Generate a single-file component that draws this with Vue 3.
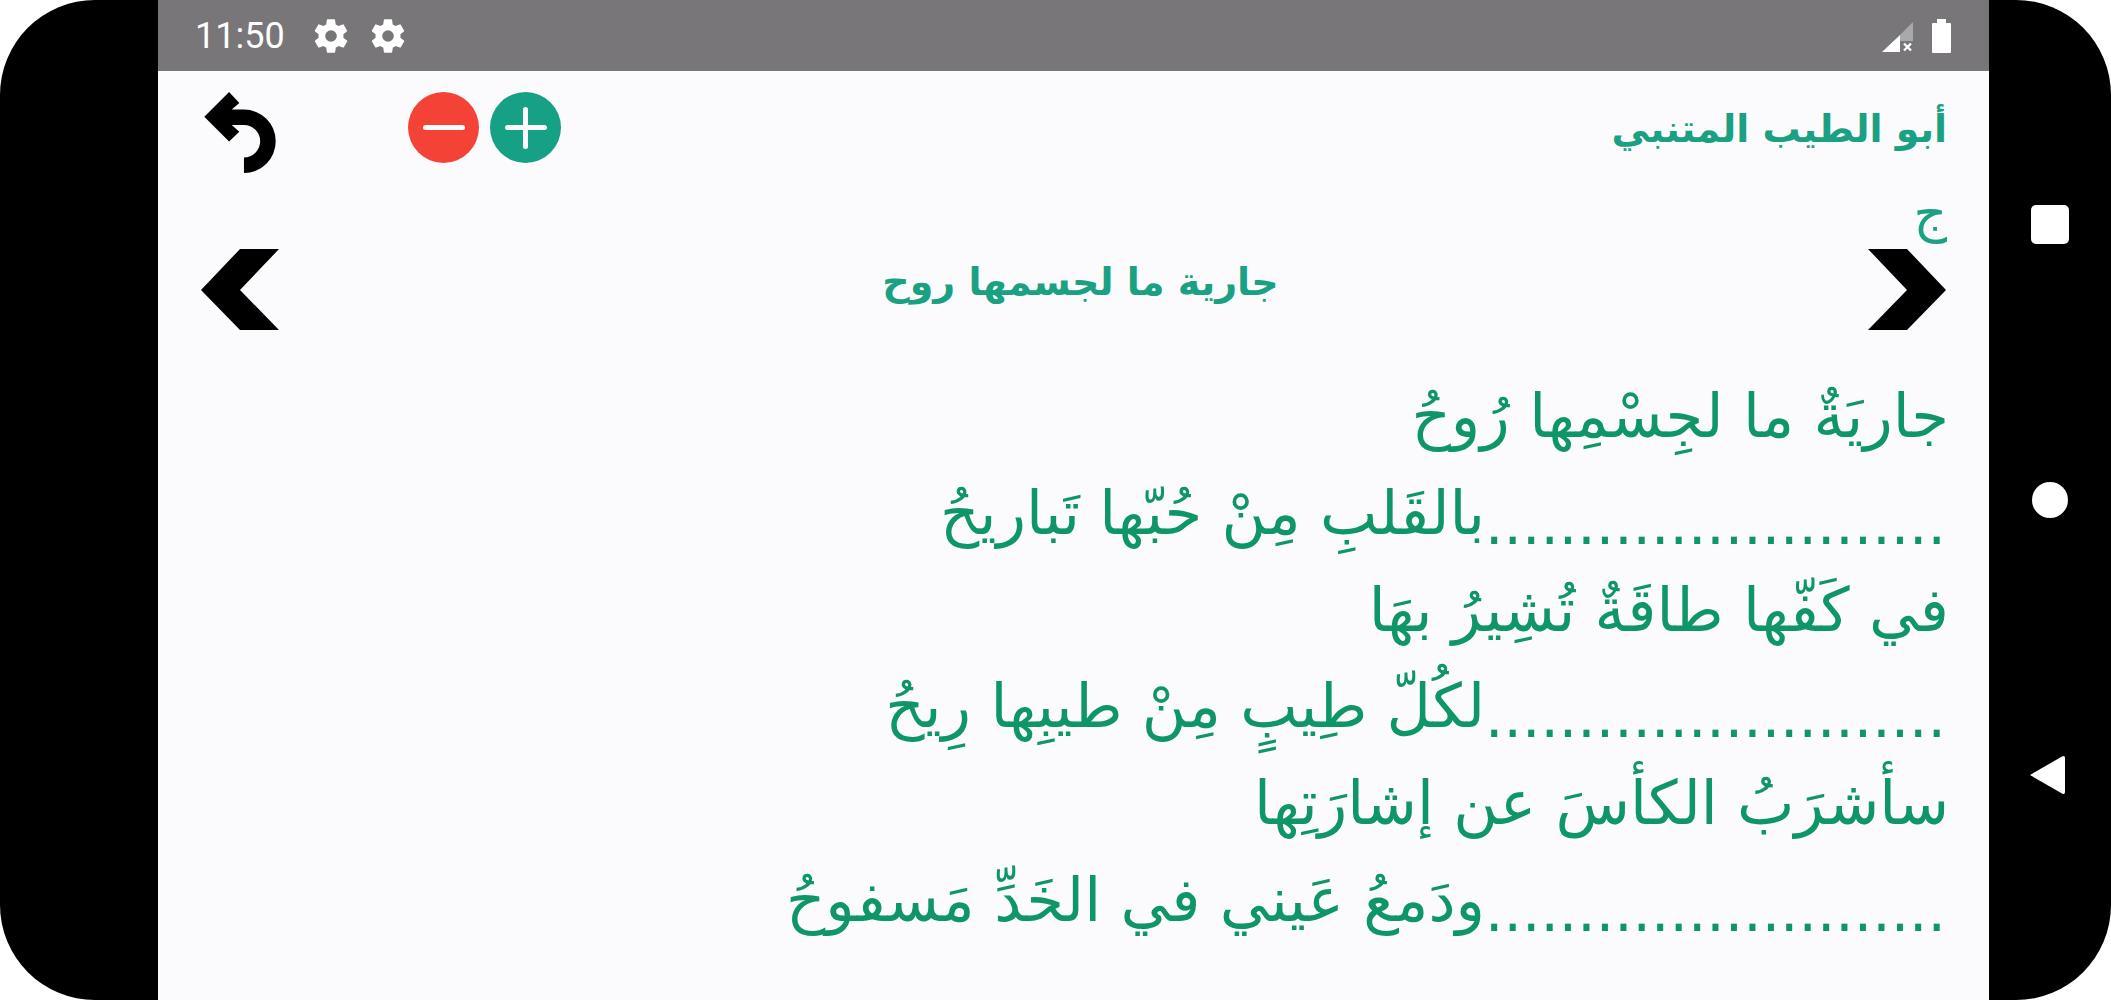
<script setup>
const dots = '.........................'
const lines = [
  { text: 'جاريَةٌ ما لجِسْمِها رُوحُ' },
  { text: 'بالقَلبِ مِنْ حُبّها تَباريحُ', dotted: true },
  { text: 'في كَفّها طاقَةٌ تُشِيرُ بهَا' },
  { text: 'لكُلّ طِيبٍ مِنْ طيبِها رِيحُ', dotted: true },
  { text: 'سأشرَبُ الكأسَ عن إشارَتِها' },
  { text: 'ودَمعُ عَيني في الخَدِّ مَسفوحُ', dotted: true }
]
</script>

<template>
  <div class="frame">
    <div class="screen">
      <header class="status">
        <span class="time">11:50</span>
        <svg class="gear" viewBox="0 0 24 24"><path fill-rule="evenodd" d="M19.4 13c.04-.32.1-.66.1-1s-.06-.68-.1-1l2.1-1.65c.2-.15.25-.42.12-.64l-2-3.46c-.12-.22-.39-.3-.6-.22l-2.5 1c-.52-.4-1.08-.73-1.7-.98l-.37-2.65A.5.5 0 0 0 14 2h-4a.5.5 0 0 0-.5.42l-.37 2.65c-.62.25-1.18.59-1.7.98l-2.5-1c-.22-.08-.48 0-.6.22l-2 3.46c-.13.22-.07.49.12.64L4.57 11c-.04.32-.07.66-.07 1s.03.68.07 1l-2.1 1.65c-.2.15-.25.42-.12.64l2 3.46c.12.22.39.3.6.22l2.5-1c.52.4 1.08.73 1.7.98l.37 2.65c.04.24.25.42.5.42h4c.25 0 .46-.18.5-.42l.37-2.65c.62-.25 1.18-.59 1.7-.98l2.5 1c.22.08.48 0 .6-.22l2-3.46c.13-.22.07-.49-.12-.64L19.4 13zM12 15.5a3.5 3.5 0 1 1 0-7 3.5 3.5 0 0 1 0 7z" fill="#fff"/></svg>
        <svg class="gear" viewBox="0 0 24 24"><path fill-rule="evenodd" d="M19.4 13c.04-.32.1-.66.1-1s-.06-.68-.1-1l2.1-1.65c.2-.15.25-.42.12-.64l-2-3.46c-.12-.22-.39-.3-.6-.22l-2.5 1c-.52-.4-1.08-.73-1.7-.98l-.37-2.65A.5.5 0 0 0 14 2h-4a.5.5 0 0 0-.5.42l-.37 2.65c-.62.25-1.18.59-1.7.98l-2.5-1c-.22-.08-.48 0-.6.22l-2 3.46c-.13.22-.07.49.12.64L4.57 11c-.04.32-.07.66-.07 1s.03.68.07 1l-2.1 1.65c-.2.15-.25.42-.12.64l2 3.46c.12.22.39.3.6.22l2.5-1c.52.4 1.08.73 1.7.98l.37 2.65c.04.24.25.42.5.42h4c.25 0 .46-.18.5-.42l.37-2.65c.62-.25 1.18-.59 1.7-.98l2.5 1c.22.08.48 0 .6-.22l2-3.46c.13-.22.07-.49-.12-.64L19.4 13zM12 15.5a3.5 3.5 0 1 1 0-7 3.5 3.5 0 0 1 0 7z" fill="#fff"/></svg>
        <span class="spacer"></span>
        <svg class="signal" viewBox="0 0 31 30">
          <path d="M31 0V19H18V13Z" fill="#a9a8aa"/>
          <path d="M0 30L18 13V30Z" fill="#fff"/>
          <path d="M22 21.5l7 7M29 21.5l-7 7" stroke="#fff" stroke-width="2.4" fill="none"/>
        </svg>
        <svg class="battery" viewBox="0 0 19 34"><path d="M5 0H14V4H18a1 1 0 0 1 1 1V33a1 1 0 0 1-1 1H1a1 1 0 0 1-1-1V5a1 1 0 0 1 1-1H5Z" fill="#fff"/></svg>
      </header>

      <main class="content">
        <div class="toolbar">
          <button class="icon-btn undo">
            <svg viewBox="72 35 216 245" width="72" height="81"><path d="M147 35L178 68L155 88H192A96 96 0 0 1 192 280V233A49 49 0 0 0 192 135H155L178 155L147 185L72 110Z" fill="#000"/></svg>
          </button>
          <button class="round minus"><span class="bar"></span></button>
          <button class="round plus"><span class="bar"></span><span class="bar vertical"></span></button>
          <h1 class="poet">أبو الطيب المتنبي</h1>
        </div>
        <div class="letter">ج</div>
        <div class="nav-row">
          <svg class="chevron" viewBox="0 0 78 81"><path d="M0 41L39 0H78L39 41L78 81H39Z" fill="#000"/></svg>
          <h2 class="poem-title">جارية ما لجسمها روح</h2>
          <svg class="chevron" viewBox="0 0 78 81"><path d="M78 41L39 0H0L39 41L0 81H39Z" fill="#000"/></svg>
        </div>
        <div class="poem">
          <p v-for="(line, i) in lines" :key="i" class="verse"><span v-if="line.dotted" class="dots">{{ dots }}</span>{{ line.text }}</p>
        </div>
      </main>
    </div>
    <aside class="softkeys">
      <span class="key-square"></span>
      <span class="key-circle"></span>
      <svg class="key-back" viewBox="0 0 37 42"><path d="M2 21L34 2.5Q37 1 37 4V38Q37 41 34 39.5Z" fill="#fff"/></svg>
    </aside>
  </div>
</template>

<style scoped>
.frame {
  width: 2111px;
  height: 1000px;
  display: flex;
  background: #000;
  border-radius: 95px;
  overflow: hidden;
  padding-left: 158px;
  box-sizing: border-box;
}
.screen {
  width: 1831px;
  display: flex;
  flex-direction: column;
  background: #fbfafc;
}
.status {
  height: 71px;
  flex: none;
  background: #787679;
  display: flex;
  align-items: center;
  padding: 0 38px 0 37px;
  box-sizing: border-box;
  color: #fff;
}
.time {
  font-family: Roboto, sans-serif;
  font-size: 36px;
  width: 116px;
}
.gear { width: 40px; height: 40px; margin-right: 17px; }
.spacer { flex: 1; }
.signal { width: 31px; height: 30px; margin-top: 3px; margin-right: 19px; }
.battery { width: 19px; height: 34px; }
.content { flex: 1; font-family: "DejaVu Sans", sans-serif; }
.toolbar {
  display: flex;
  align-items: flex-start;
  padding: 21px 42px 0 46px;
  height: 106px;
  box-sizing: border-box;
}
.icon-btn, .round { border: 0; padding: 0; background: none; }
.icon-btn svg { display: block; }
.undo { margin-right: 132px; }
.round {
  width: 71px;
  height: 71px;
  border-radius: 50%;
  position: relative;
  display: flex;
  align-items: center;
  justify-content: center;
}
.minus { background: #f44336; margin-right: 11px; }
.plus { background: #16a085; }
.bar { width: 42px; height: 5px; border-radius: 3px; background: #fbfafc; display: block; }
.bar.vertical { width: 5px; height: 42px; position: absolute; }
.poet {
  margin: 0 0 0 auto;
  direction: rtl;
  font-size: 38px;
  font-weight: 700;
  color: #1aa082;
  line-height: 74px;
}
.letter {
  direction: rtl;
  padding-right: 42px;
  font-size: 52px;
  line-height: 72px;
  color: #1aa082;
}
.nav-row {
  display: flex;
  align-items: center;
  justify-content: space-between;
  padding: 0 43px;
}
.chevron { width: 78px; height: 81px; display: block; }
.poem-title {
  margin: -16px 0 0 14px;
  direction: rtl;
  font-size: 38px;
  font-weight: 700;
  color: #1aa082;
}
.poem { direction: rtl; padding: 38px 40px 0 0; }
.verse {
  margin: 0;
  font-size: 61px;
  line-height: 96.75px;
  color: #0e9668;
  white-space: nowrap;
}
.dots {
  font-size: 58px;
  line-height: 0;
  vertical-align: -10px;
  margin-right: 3px;
}
.softkeys {
  position: relative;
  flex: 1;
  display: flex;
  flex-direction: column;
  align-items: center;
  padding: 205px 0 0 0;
}
.key-square { width: 38px; height: 39px; border-radius: 5px; background: #fff; margin-bottom: 238px; }
.key-circle { width: 36px; height: 36px; border-radius: 50%; background: #fff; margin-bottom: 236px; }
.key-back { width: 37px; height: 42px; margin-left: -7px; }
</style>

<style>
html, body { background: #fff; }
</style>
